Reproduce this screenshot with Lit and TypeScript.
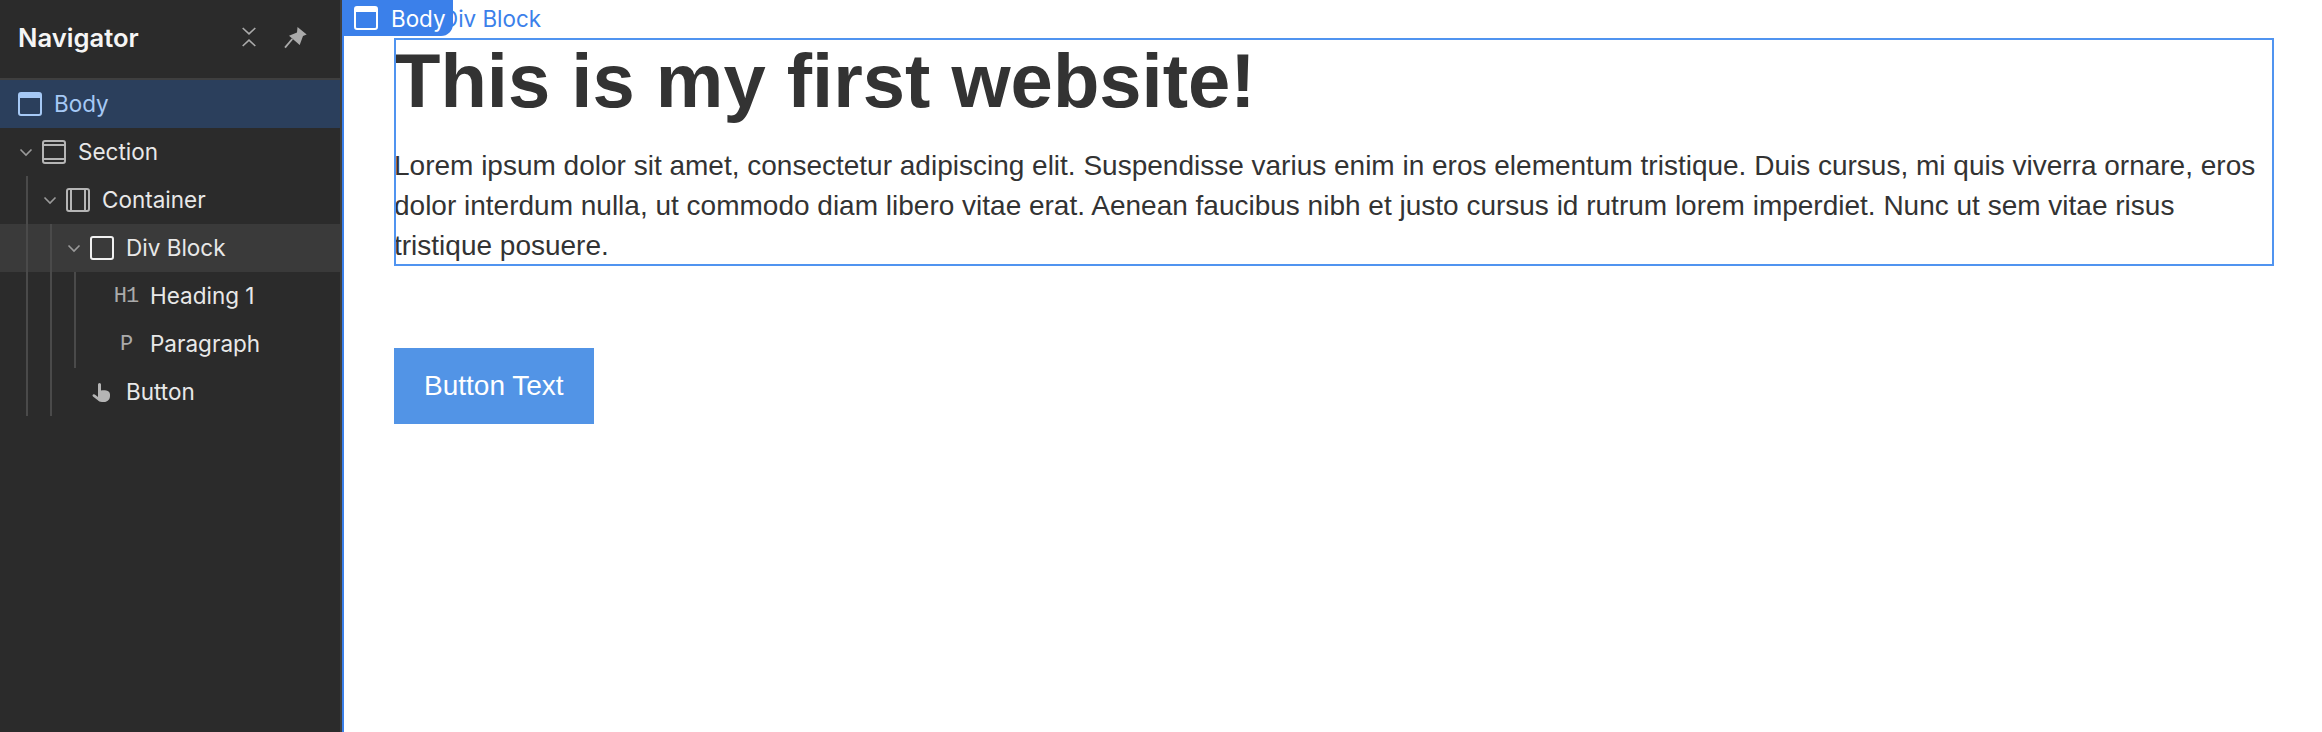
import { LitElement, html, css, svg } from "lit";
import { customElement } from "lit/decorators.js";

const boxIcon = (inner: unknown) => html`<svg class="ic" viewBox="0 0 24 24" fill="none" stroke="currentColor" stroke-width="2">${inner}</svg>`;
const icons: Record<string, () => unknown> = {
  body: () => boxIcon(svg`<rect x="1" y="1" width="22" height="22" rx="2"/><rect x="1" y="1" width="22" height="5" fill="currentColor" stroke="none"/>`),
  section: () => boxIcon(svg`<rect x="1" y="1" width="22" height="22" rx="2"/><path d="M1 5h22M1 19h22"/>`),
  container: () => boxIcon(svg`<rect x="1" y="1" width="22" height="22" rx="2"/><path d="M5 1v22M19 1v22"/>`),
  div: () => boxIcon(svg`<rect x="1" y="1" width="22" height="22" rx="2"/>`),
  h1: () => html`<span class="mono">H1</span>`,
  p: () => html`<span class="mono">P</span>`,
  button: () => html`<svg class="ic" viewBox="0 0 24 24" fill="currentColor"><path d="M8 4.500a1.500 1.500 0 0 1 3 0V10.500l1.500-.2c3.700-.4 7.500.8 7.500 4.200V16c0 3.500-2.600 6-6 6h-2c-2.200 0-3.300-.8-4.500-2L3 16.500c-.8-.9-.5-1.700.2-2 .8-.4 1.600-.1 2.300.6L8 17z"/></svg>`,
};

const rows = [
  { name: "Body", icon: "body", depth: 0, chev: false, cls: "sel root" },
  { name: "Section", icon: "section", depth: 0, chev: true, cls: "" },
  { name: "Container", icon: "container", depth: 1, chev: true, cls: "" },
  { name: "Div Block", icon: "div", depth: 2, chev: true, cls: "hl" },
  { name: "Heading 1", icon: "h1", depth: 3, chev: false, cls: "" },
  { name: "Paragraph", icon: "p", depth: 3, chev: false, cls: "" },
  { name: "Button", icon: "button", depth: 2, chev: false, cls: "" },
];
const guides = [
  { x: 26, top: 96, h: 240 },
  { x: 50, top: 144, h: 192 },
  { x: 74, top: 192, h: 96 },
];

@customElement("app-root")
export class AppRoot extends LitElement {
  static styles = css`
    :host { display: block; height: 732px; overflow: hidden; }
    * { box-sizing: border-box; }
    .app { display: flex; height: 732px; background: #fff; }
    .nav { width: 342px; flex: none; background: #2b2b2b; border-right: 2px solid #3f3f3f; font-family: Inter, sans-serif; color: #f0f0f0; }
    .head { height: 80px; border-bottom: 2px solid #3f3f3f; display: flex; align-items: center; padding: 0 32px 2px 18px; }
    .title { font-size: 25.6px; font-weight: 600; color: #f5f5f5; flex: 1; padding-bottom: 2px; }
    .hbtns { display: flex; gap: 27px; align-items: center; color: #ababab; padding-bottom: 2px; }
    .hbtns svg { display: block; }
    .tree { position: relative; }
    .row { height: 48px; display: flex; align-items: center; font-size: 22.5px; color: #e8e8e8; }
    .row.sel { background: #2b3f5c; color: #a6c9f5; }
    .row.hl { background: #3a3a3a; }
    .chev { width: 24px; height: 24px; flex: none; display: flex; align-items: center; justify-content: center; color: #9a9a9a; margin-left: 14px; }
    .row.root .chev { display: none; }
    .iconwrap { width: 24px; height: 24px; flex: none; margin-left: 4px; display: flex; align-items: center; justify-content: center; color: #b5b5b5; }
    .row.root .iconwrap { margin-left: 18px; }
    .row.sel .iconwrap { color: #a6c9f5; }
    .row.hl .iconwrap { color: #f0f0f0; }
    .ic { width: 24px; height: 24px; display: block; }
    .mono { font-family: "Liberation Mono", monospace; font-size: 22px; letter-spacing: -1px; color: #aaa; }
    .label { margin-left: 12px; white-space: nowrap; padding-bottom: 2px; }
    .guide { position: absolute; width: 2px; background: #4a4a4a; }
    .canvas { flex: 1; position: relative; min-width: 0; box-shadow: inset 2px 0 0 #3b80ea; font-family: "Liberation Sans", Arial, sans-serif; padding: 38px 48px 0 52px; }
    .box { outline: 2px solid #5094f0; outline-offset: -2px; height: 228px; color: #333; }
    h1 { margin: 0; font-size: 76px; line-height: 86px; font-weight: 700; color: #333; }
    p { margin: 0; font-size: 28px; line-height: 40px; padding-top: 22px; color: #333; }
    .btn { display: inline-block; margin-top: 82px; background: #5294e6; color: #fff; font-size: 28px; line-height: 40px; padding: 18px 30px; height: 76px; }
    .divtag { position: absolute; left: 100px; top: 0; font-family: Inter, sans-serif; font-size: 22.4px; line-height: 38px; color: #3b80ea; }
    .bodytag { position: absolute; left: 0; top: 0; height: 36px; width: 111px; background: #3b80ea; color: #fff; border-bottom-right-radius: 12px; display: flex; align-items: center; padding-left: 12px; gap: 13px; font-family: Inter, sans-serif; font-size: 22.4px; }
    .bodytag .ic { color: #fff; }
  `;

  render() {
    return html`<div class="app">
      <aside class="nav">
        <div class="head">
          <div class="title">Navigator</div>
          <div class="hbtns">
            <svg width="16" height="22" viewBox="0 0 16 22" fill="none" stroke="currentColor" stroke-width="1.6"><path d="M1.700 2L8 7.800 14.300 2M1.700 20L8 14.200 14.300 20"/></svg>
            <svg width="24" height="24" viewBox="0 0 24 24" fill="currentColor"><path d="M13.500 2l9.200 7.500-3.700 1.500-3.300 9L5 10.700 13 7.500z"/><path d="M1 22.700L8.300 14" stroke="currentColor" stroke-width="1.800" fill="none"/></svg>
          </div>
        </div>
        <div class="tree">
          ${rows.map((r) => html`<div class="row ${r.cls}" style="padding-left:${r.depth * 24}px">
            ${r.chev
              ? html`<span class="chev"><svg width="14" height="14" viewBox="0 0 14 14" fill="none" stroke="currentColor" stroke-width="1.6"><path d="M1.500 4.500L7 10l5.500-5.500"/></svg></span>`
              : html`<span class="chev" style="visibility:hidden"></span>`}
            <span class="iconwrap">${icons[r.icon]()}</span>
            <span class="label">${r.name}</span>
          </div>`)}
          ${guides.map((g) => html`<div class="guide" style="left:${g.x}px;top:${g.top}px;height:${g.h}px"></div>`)}
        </div>
      </aside>
      <main class="canvas">
        <div class="box">
          <h1>This is my first website!</h1>
          <p>Lorem ipsum dolor sit amet, consectetur adipiscing elit. Suspendisse varius enim in eros elementum tristique. Duis cursus, mi quis viverra ornare, eros dolor interdum nulla, ut commodo diam libero vitae erat. Aenean faucibus nibh et justo cursus id rutrum lorem imperdiet. Nunc ut sem vitae risus tristique posuere.</p>
        </div>
        <a class="btn">Button Text</a>
        <div class="divtag">Div Block</div>
        <div class="bodytag">${icons.body()}<span>Body</span></div>
      </main>
    </div>`;
  }
}
